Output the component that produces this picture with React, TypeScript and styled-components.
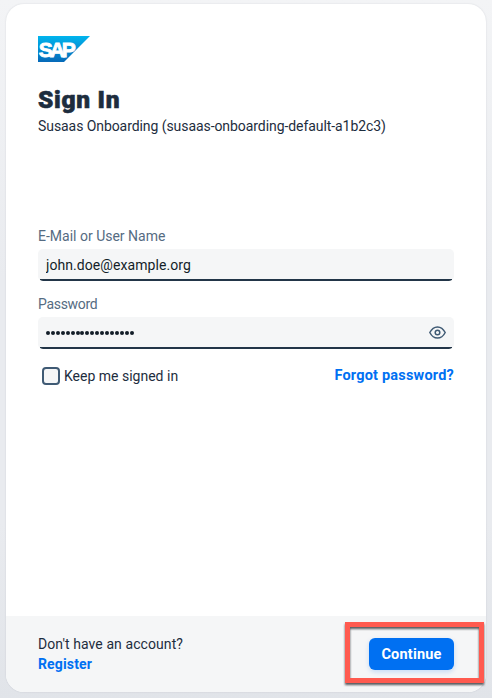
import React from 'react';
import styled, { createGlobalStyle } from 'styled-components';

const GlobalStyle = createGlobalStyle`
  * { box-sizing: border-box; }
  body {
    margin: 0;
    font-family: Roboto, "Liberation Sans", sans-serif;
    font-size: 14px;
    color: #1d2d3e;
    -webkit-font-smoothing: antialiased;
  }
`;

const Page = styled.div`
  height: 698px;
  padding: 4px 6px 6px;
  overflow: hidden;
  background: linear-gradient(180deg, #f3f4f6 0%, #e9ebef 40%, #e9ebef 75%, #e1e4e9 100%);
`;

const Card = styled.main`
  position: relative;
  display: flex;
  flex-direction: column;
  height: 688px;
  border-radius: 18px;
  background: #fff;
  box-shadow: 0 0 2px rgba(34, 53, 72, 0.14);
`;

const Content = styled.div`
  flex: 1;
  padding: 32px 32px 0;
`;

const Logo = styled.svg`
  display: block;
  width: 52px;
  height: 26px;
`;

const Title = styled.h1`
  margin: 23px 0 1px;
  font-size: 24.5px;
  font-weight: 900;
  line-height: 30px;
  letter-spacing: 0.7px;
  -webkit-text-stroke: 0.6px #1d2d3e;
`;

const Text = styled.p<{ $spacing?: number }>`
  margin: 0;
  line-height: 20px;
  white-space: nowrap;
  letter-spacing: ${(p) => p.$spacing ?? 0}px;
`;

const Form = styled.form`
  display: flex;
  flex-direction: column;
  margin-top: 91px;
`;

const Label = styled.label<{ $spacing?: number }>`
  height: 22px;
  line-height: 18px;
  color: #556b82;
  letter-spacing: ${(p) => p.$spacing ?? 0}px;
`;

const Field = styled.div`
  display: flex;
  align-items: center;
  height: 32px;
  margin-bottom: 14px;
  padding: 0 8px;
  border-radius: 5px;
  background: linear-gradient(#223548, #223548) bottom / calc(100% - 4px) 2px no-repeat #f5f6f7;
`;

const Input = styled.input`
  flex: 1;
  min-width: 0;
  padding: 0;
  border: 0;
  outline: 0;
  background: transparent;
  font: inherit;
  color: #131e29;
  letter-spacing: 0.07px;
`;

const Dots = styled.div`
  flex: 1;
  display: flex;
  gap: 0.93px;
`;

const Dot = styled.i`
  width: 4px;
  height: 4px;
  border-radius: 50%;
  background: #131e29;
`;

const EyeIcon = styled.svg`
  width: 17px;
  height: 13px;
  margin-bottom: 2px;
  fill: none;
  stroke: #3f5a74;
  stroke-width: 1.5;
`;

const Options = styled.div`
  display: flex;
  align-items: center;
  justify-content: space-between;
  height: 20px;
  margin-top: 3px;
`;

const Keep = styled.label`
  display: flex;
  align-items: center;
  gap: 4px;
  padding-left: 4px;
`;

const Checkbox = styled.input`
  appearance: none;
  width: 18px;
  height: 18px;
  margin: 0;
  border: 2px solid #3f5a74;
  border-radius: 4px;
  background: #f5f6f7;
`;

const Link = styled.a<{ $spacing?: number }>`
  line-height: 20px;
  font-weight: 700;
  color: #0070f2;
  letter-spacing: ${(p) => p.$spacing ?? 0}px;
`;

const ForgotLink = styled(Link)`
  font-size: 14.5px;
`;

const Footer = styled.footer`
  display: flex;
  justify-content: space-between;
  height: 76px;
  padding: 18px 32px 0;
  border-radius: 0 0 18px 18px;
  background: #f5f6f7;
`;

const Button = styled.button`
  width: 85px;
  height: 32px;
  margin-top: 4px;
  padding: 0;
  border: 0;
  border-radius: 6px;
  background: #0070f2;
  box-shadow: 0 2px 5px rgba(0, 112, 242, 0.2);
  font: inherit;
  font-size: 14.5px;
  font-weight: 700;
  letter-spacing: 0.2px;
  color: #fff;
`;

const Highlight = styled.div`
  position: absolute;
  right: 2px;
  bottom: 9px;
  width: 139px;
  height: 61px;
  border: 5px solid #ff5a4f;
  filter: drop-shadow(0 2px 0.8px rgba(45, 48, 52, 0.8));
  pointer-events: none;
`;

export default function App() {
  return (
    <>
      <GlobalStyle />
      <Page>
        <Card>
          <Content>
            <Logo viewBox="0 0 52 26" role="img" aria-label="SAP">
              <defs>
                <linearGradient id="sap" x2="0" y2="1">
                  <stop stopColor="#00b5ee" />
                  <stop offset="1" stopColor="#0669b8" />
                </linearGradient>
              </defs>
              <path d="M0 0H52L26 26H0Z" fill="url(#sap)" />
              <text x="0.8" y="20.5" fill="#fff" stroke="#fff" strokeWidth="0.85" fontFamily="Liberation Sans, sans-serif" fontSize="21" fontWeight="700" textLength="37" lengthAdjust="spacing">SAP</text>
            </Logo>
            <Title>Sign In</Title>
            <Text $spacing={-0.07}>Susaas Onboarding (susaas-onboarding-default-a1b2c3)</Text>
            <Form onSubmit={(e) => e.preventDefault()}>
              <Label htmlFor="user">E-Mail or User Name</Label>
              <Field>
                <Input id="user" defaultValue="john.doe@example.org" />
              </Field>
              <Label $spacing={-0.3}>Password</Label>
              <Field>
                <Dots>
                  {Array.from({ length: 18 }, (_, i) => <Dot key={i} />)}
                </Dots>
                <EyeIcon viewBox="0 0 17 13">
                  <path d="M0.8 6.5C2.7 2.8 5.2 0.9 8.5 0.9S14.3 2.8 16.2 6.5C14.3 10.2 11.8 12.1 8.5 12.1S2.7 10.2 0.8 6.5Z" strokeLinejoin="round" />
                  <circle cx="8.5" cy="6.5" r="2.3" />
                </EyeIcon>
              </Field>
              <Options>
                <Keep>
                  <Checkbox type="checkbox" />
                  Keep me signed in
                </Keep>
                <ForgotLink $spacing={0.2}>Forgot password?</ForgotLink>
              </Options>
            </Form>
          </Content>
          <Footer>
            <div>
              <Text $spacing={0.08}>Don't have an account?</Text>
              <Link $spacing={0.15}>Register</Link>
            </div>
            <Button>Continue</Button>
          </Footer>
          <Highlight />
        </Card>
      </Page>
    </>
  );
}
